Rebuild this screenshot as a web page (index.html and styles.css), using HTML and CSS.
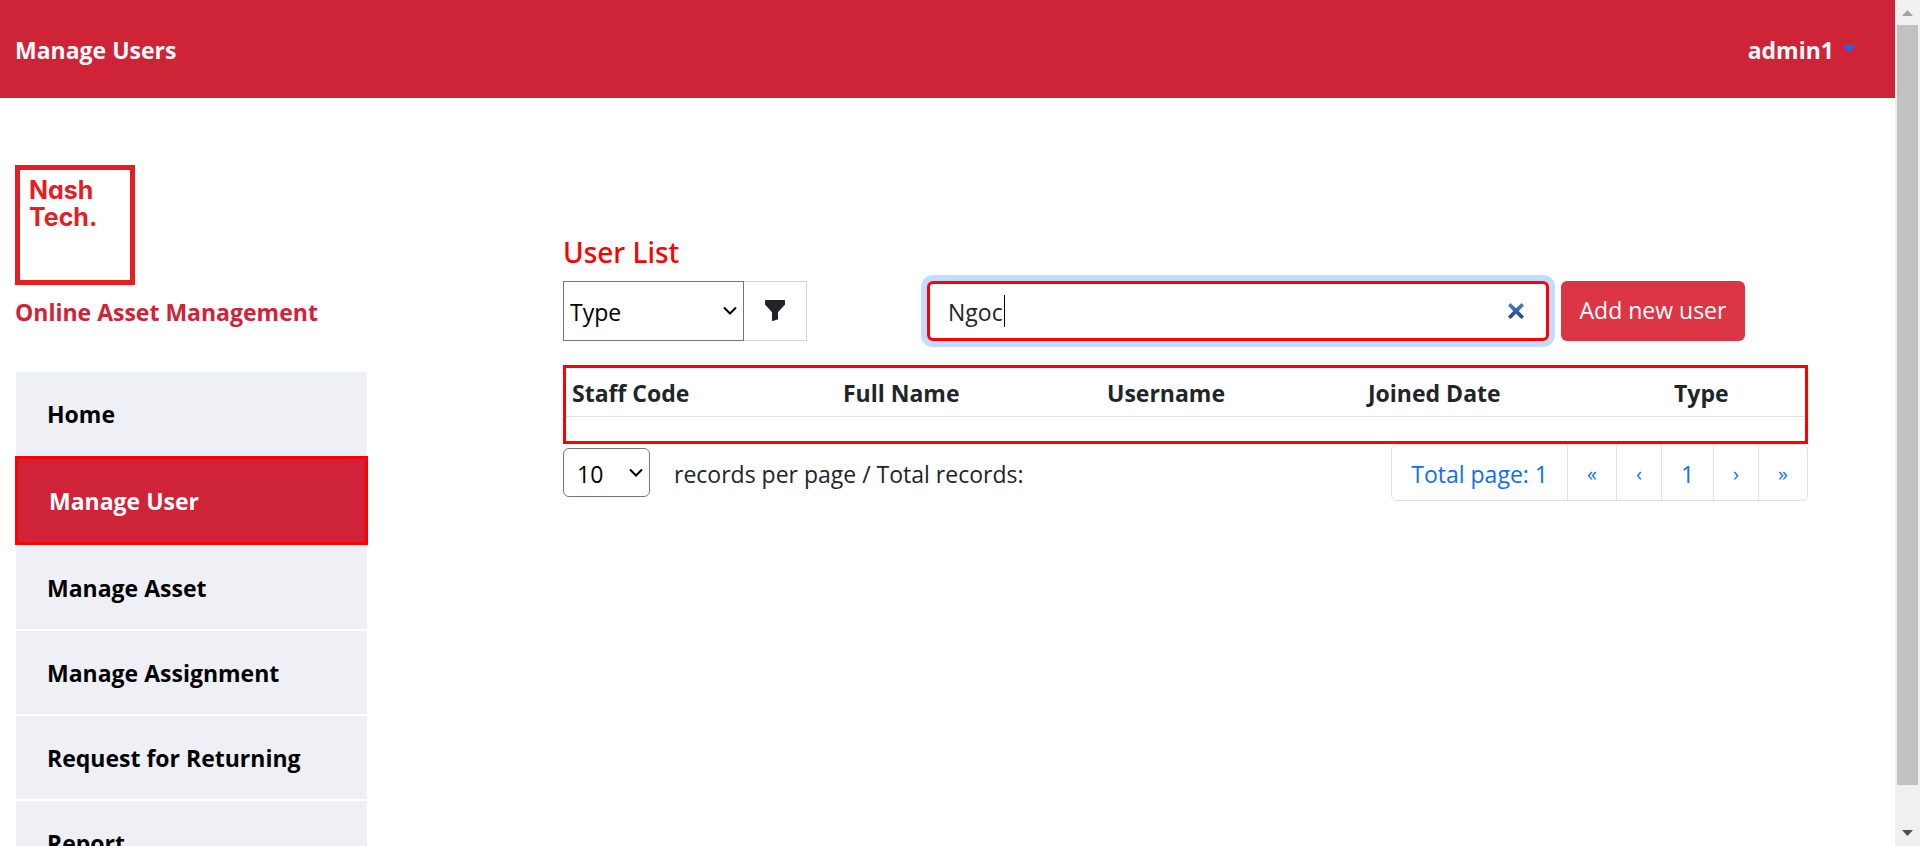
FILE: index.html
```html
<!DOCTYPE html>
<html lang="en">
<head>
<meta charset="utf-8">
<title>Manage Users</title>
<link rel="stylesheet" href="styles.css">
</head>
<body>
<div class="window">
  <div class="page">
    <header class="topbar">
      <h1 class="topbar-title">Manage Users</h1>
      <button class="account" type="button">admin1
        <svg class="account-caret" viewBox="0 0 14 7" aria-hidden="true"><path d="M0 0h14L7 7z"/></svg>
      </button>
    </header>
    <div class="layout">
      <aside class="sidebar">
        <div class="logo">Nash<br>Tech.</div>
        <h2 class="brand">Online Asset Management</h2>
        <nav class="menu">
          <a class="menu-item" href="#">Home</a>
          <a class="menu-item active" href="#">Manage User</a>
          <a class="menu-item" href="#">Manage Asset</a>
          <a class="menu-item" href="#">Manage Assignment</a>
          <a class="menu-item" href="#">Request for Returning</a>
          <a class="menu-item" href="#">Report</a>
        </nav>
      </aside>
      <main class="content">
        <h2 class="heading">User List</h2>
        <div class="toolbar">
          <div class="filter">
            <div class="select-wrap">
              <select class="type-select" aria-label="Type"><option>Type</option><option>Admin</option><option>Staff</option></select>
              <svg class="chevron" viewBox="0 0 14 9" aria-hidden="true"><path d="M1 1.500l6 6 6-6"/></svg>
            </div>
            <button class="filter-button" type="button" aria-label="Filter">
              <svg viewBox="0 0 20 21" width="20" height="21" aria-hidden="true"><path d="M1 0h18q1 0 1 1v3.200q0 .5-.4.900L13 12.200v6.500q0 .5-.5.700L8 21q-1 .2-1-.8v-8L.4 5.100Q0 4.700 0 4.200V1q0-1 1-1z"/></svg>
            </button>
          </div>
          <form class="search">
            <input class="search-input" type="text" value="Ngoc" aria-label="Search users">
            <span class="text-cursor"></span>
            <button class="clear" type="button" aria-label="Clear search">
              <svg viewBox="0 0 18 18" width="18" height="18" aria-hidden="true">
                <defs><linearGradient id="cross" x1="0" y1="0" x2="0" y2="1"><stop offset="0" stop-color="#4a86c8"/><stop offset="1" stop-color="#24407a"/></linearGradient></defs>
                <path fill="url(#cross)" d="M3.500 1 9 6.200 14.500 1 17 3.500 11.800 9 17 14.500 14.500 17 9 11.800 3.500 17 1 14.500 6.200 9 1 3.500z"/>
              </svg>
            </button>
          </form>
          <button class="add" type="button">Add new user</button>
        </div>
        <table class="users">
          <colgroup><col class="c1"><col class="c2"><col class="c3"><col class="c4"><col class="c5"></colgroup>
          <thead><tr><th>Staff Code</th><th>Full Name</th><th>Username</th><th>Joined Date</th><th>Type</th></tr></thead>
          <tbody><tr><td colspan="5"></td></tr></tbody>
        </table>
        <div class="footer">
          <div class="records">
            <div class="select-wrap">
              <select class="size-select" id="size"><option>10</option><option>20</option></select>
              <svg class="chevron" viewBox="0 0 14 9" aria-hidden="true"><path d="M1 1.500l6 6 6-6"/></svg>
            </div>
            <label for="size">records per page / Total records:</label>
          </div>
          <nav class="pages" aria-label="Pages">
            <a class="page-link" href="#">Total page: 1</a>
            <a class="page-link mark" href="#">«</a>
            <a class="page-link mark" href="#">‹</a>
            <a class="page-link" href="#">1</a>
            <a class="page-link mark" href="#">›</a>
            <a class="page-link mark" href="#">»</a>
          </nav>
        </div>
      </main>
    </div>
  </div>
  <div class="scrollbar" aria-hidden="true">
    <svg viewBox="0 0 11 6" width="11" height="6"><path fill="#a3a3a3" d="M0 6h11L5.500 0z"/></svg>
    <div class="track"><div class="thumb"></div></div>
    <svg viewBox="0 0 11 6" width="11" height="6"><path fill="#505050" d="M0 0h11L5.500 6z"/></svg>
  </div>
</div>
</body>
</html>
```
FILE: styles.css
```css
* { box-sizing: border-box; }

body {
  margin: 0;
  font-family: "Open Sans", "Noto Sans", sans-serif;
  font-size: 23px;
  line-height: 36px;
  color: #212529;
  background: #fff;
}

h1, h2 { margin: 0; font-size: inherit; }
a { text-decoration: none; }
button, input, select { font: inherit; color: inherit; margin: 0; }
svg { display: block; }

.window { display: flex; height: 100vh; overflow: hidden; }
.page { flex: 1; min-width: 0; overflow: hidden; }

.topbar {
  display: flex;
  justify-content: space-between;
  align-items: center;
  padding: 32px 39px 30px 15px;
  background: #cf2338;
  color: #f8f9fa;
}
.topbar-title, .account, .brand, .menu-item, .users th { font-size: 23px; font-weight: 700; }
.account {
  display: flex;
  align-items: center;
  gap: 8px;
  padding: 0;
  border: 0;
  background: none;
}
.account-caret { width: 14px; height: 7px; margin-bottom: 4px; fill: #0d6efd; }

.layout {
  display: grid;
  grid-template-columns: 353px minmax(0, 1fr);
  gap: 195px;
  padding: 67px 87px 0 15px;
}

.logo {
  width: 120px;
  height: 120px;
  padding: 7px 9px;
  border: 5px solid #e51d25;
  color: #e51d25;
  font: 700 25px/27px Inter, sans-serif;
  font-feature-settings: "cv11";
}
.brand { margin-top: 9px; color: #cf2338; }

.menu { display: flex; flex-direction: column; margin-top: 41px; }
.menu-item {
  padding: 25px 31px 23px;
  border: 1px solid #fff;
  line-height: 35px;
  color: #000;
  background: #eff0f5;
}
.menu-item.active { border: 3px solid #f00; color: #fff; background: #cf2338; }

.content { padding-top: 67px; }
.heading { font-family: "Noto Sans", sans-serif; font-size: 28px; font-weight: 500; line-height: 40px; color: #f00; }

.toolbar { display: flex; height: 60px; margin-top: 9px; }
.filter { display: flex; }
.select-wrap { position: relative; }
select { appearance: none; background: #fff; color: #000; border: 1px solid #767676; }
.chevron {
  position: absolute;
  right: 7px;
  top: 50%;
  width: 14px;
  height: 9px;
  margin-top: -5px;
  fill: none;
  stroke: #000;
  stroke-width: 2;
  pointer-events: none;
}
.type-select { width: 181px; height: 60px; padding: 2px 6px 0; }
.filter-button {
  display: flex;
  align-items: center;
  justify-content: center;
  width: 63px;
  padding: 0 0 2px;
  border: 1px solid #ced4da;
  border-left: 0;
  background: #fff;
}
.filter-button svg { fill: #212529; }

.search { position: relative; flex: 1; margin: 0 12px 0 120px; }
.search-input {
  width: 100%;
  height: 60px;
  padding: 2px 60px 0 18px;
  border: 3px solid #f00;
  border-radius: 6px;
  outline: 0;
  box-shadow: 0 0 0 6px #c2dbfe;
}
.text-cursor { position: absolute; left: 77px; top: 14px; width: 1px; height: 32px; background: #000; }
.clear { position: absolute; right: 24px; top: 21px; padding: 0; border: 0; background: none; }

.add {
  width: 184px;
  margin-right: 63px;
  padding: 0 0 2px;
  border: 0;
  border-radius: 6px;
  color: #fff;
  background: #dc3545;
}

.users {
  width: 100%;
  margin-top: 24px;
  border: 3px solid #f00;
  border-spacing: 0;
  table-layout: fixed;
}
.users th { padding: 7px 6px 5px; text-align: left; border-bottom: 1px solid #dee2e6; }
.users td { height: 24px; padding: 0; }
.c1 { width: 271px; }
.c2 { width: 264px; }
.c3 { width: 261px; }
.c4 { width: 306px; }

.footer { display: flex; justify-content: space-between; align-items: flex-start; }
.records { display: flex; align-items: center; gap: 24px; padding-top: 4px; }
.records label { padding-top: 2px; }
.size-select { display: block; width: 87px; height: 49px; padding: 2px 13px 0; border-radius: 6px; }

.pages { display: flex; border: 1px solid #dee2e6; border-radius: 6px; }
.page-link { padding: 11px 19px 8px; color: #0d6efd; }
.page-link + .page-link { border-left: 1px solid #dee2e6; }
.page-link.mark { font-size: 20px; }

.scrollbar {
  display: flex;
  flex-direction: column;
  align-items: center;
  justify-content: space-between;
  width: 25px;
  padding: 10px 2px;
  background: #f0f0f0;
}
.track { display: grid; grid-template-rows: 21fr 1fr; flex: 1; align-self: stretch; margin: 9px 0; }
.thumb { background: #c1c1c1; }
```
